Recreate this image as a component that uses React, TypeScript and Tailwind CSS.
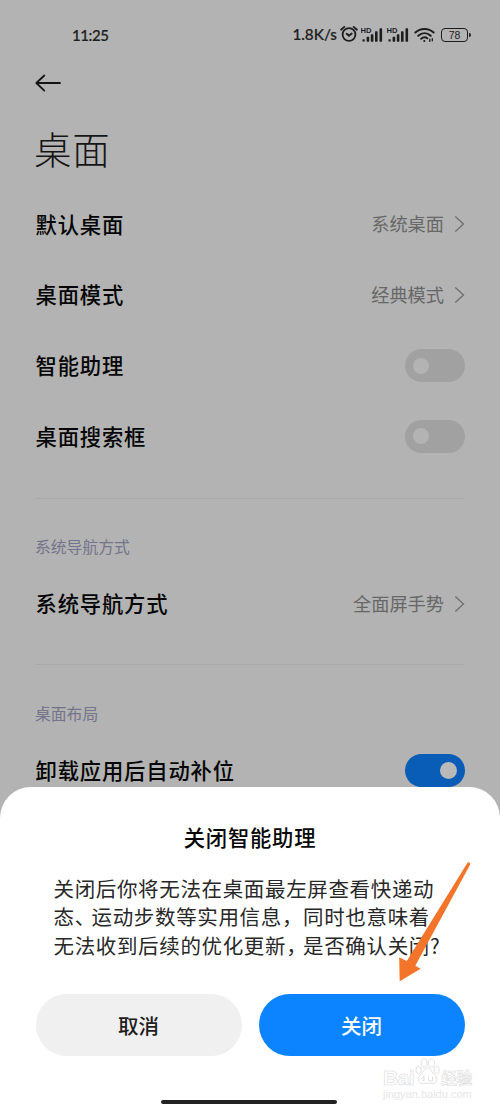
import React from "react";

function Chevron() {
  return (
    <svg className="ml-[10px] h-[18px] w-[11px]" viewBox="0 0 11 18" fill="none" stroke="#6e6e6e" strokeWidth="1.3">
      <path d="M1.3 1.5 L9.5 9 L1.3 16.5" />
    </svg>
  );
}

function Toggle({ on = false }: { on?: boolean }) {
  return on ? (
    <div className="flex h-[33px] w-[60px] items-center justify-end rounded-full bg-[#0a5db7] pr-[8px]">
      <div className="size-[17px] rounded-full bg-[#b9b9b9]" />
    </div>
  ) : (
    <div className="flex h-[33px] w-[60px] items-center rounded-full bg-[#a1a1a1] pl-[8px]">
      <div className="size-[16px] rounded-full bg-[#b3b3b3]" />
    </div>
  );
}

function Row({ label, value, children }: { label: string; value?: string; children?: React.ReactNode }) {
  return (
    <div className="flex h-[70.7px] items-center justify-between">
      <span className="pb-[2px] pl-[0.5px] text-[21.3px] leading-none font-medium tracking-[0.85px] whitespace-nowrap text-[#050505]">{label}</span>
      {value ? (
        <span className="flex items-center text-[18.2px] leading-none text-[#676767]">
          <span className="pb-[2px]">{value}</span>
          <Chevron />
        </span>
      ) : (
        children
      )}
    </div>
  );
}

function Signal() {
  return (
    <svg className="h-[16px] w-[23px]" viewBox="0 0 23 16" fill="#1d1d1d">
      <text x="-0.5" y="6.2" fontSize="7.6" fontWeight="600" textLength="11" lengthAdjust="spacingAndGlyphs" fontFamily="Liberation Sans, sans-serif">HD</text>
      <rect x="1.5" y="12.3" width="2.2" height="2.2" />
      <rect x="5.6" y="9.8" width="2.6" height="4.9" rx=".6" />
      <rect x="9.8" y="7.3" width="2.6" height="7.4" rx=".6" />
      <rect x="14" y="4.3" width="2.6" height="10.4" rx=".6" />
      <rect x="18.5" y="1.3" width="2.6" height="13.4" rx=".6" />
    </svg>
  );
}

function StatusBar() {
  return (
    <div className="flex h-[70px] items-center justify-between pr-[29px] pl-[72px] font-['Lato','Noto_Sans_CJK_SC',sans-serif] text-[#1d1d1d]">
      <span className="text-[15px] leading-none font-medium tracking-[-0.4px] [-webkit-text-stroke:0.2px_#1d1d1d]">11:25</span>
      <div className="flex items-center">
        <span className="mr-[3px] text-[15.3px] leading-none font-medium [-webkit-text-stroke:0.2px_#1d1d1d]">1.8K/s</span>
        <svg className="mt-[-2px] mr-[3px] h-[18px] w-[18px]" viewBox="0 0 18 17" fill="none" stroke="#1d1d1d" strokeWidth="1.8" strokeLinecap="round">
          <circle cx="9" cy="9" r="6.4" />
          <path d="M1.1 4.2 L4.3 1.4 M16.9 4.2 L13.7 1.4 M6.7 8.2 L9 10.2 L11.7 8" />
        </svg>
        <Signal />
        <div className="ml-[3px] flex">
          <Signal />
        </div>
        <svg className="ml-[4px] h-[16px] w-[21px]" viewBox="0 0 21 16" fill="none" stroke="#1d1d1d" strokeWidth="2" strokeLinecap="round">
          <path d="M1.4 5.5 C6.5 .7 14.5 .7 19.6 5.5 M4.3 8.8 C8 5.5 13 5.5 16.7 8.8" />
          <path d="M7.2 11.8 C9.2 10 11.6 10 13.3 11.3" />
          <circle cx="10.3" cy="14" r="1.1" fill="#1d1d1d" stroke="none" />
          <path d="M15.8 12.2 V14.4 M18.3 11.6 V13.8" strokeWidth="1.3" />
        </svg>
        <div className="ml-[6px] flex h-[14px] w-[27px] items-center justify-center rounded-[4px] border-[1.5px] border-[#1d1d1d] font-['Liberation_Sans',sans-serif] text-[10.5px] leading-none">
          78
        </div>
        <div className="ml-px h-[4px] w-[2px] rounded-r-full bg-[#1d1d1d]" />
      </div>
    </div>
  );
}

function Watermark() {
  return (
    <div className="absolute top-[271px] left-[383px] w-[92px]">
      <div className="flex h-[30px] items-end leading-none font-bold text-white [-webkit-text-stroke:0.6px_#dadada]">
        <span className="font-['Liberation_Sans',sans-serif] text-[21px] tracking-[-0.5px]">Bai</span>
        <svg className="mb-[3px] h-[27px] w-[27px]" viewBox="0 0 25 27" fill="white" stroke="#dedede" strokeWidth=".9">
          <ellipse cx="9" cy="5" rx="3" ry="4.2" />
          <ellipse cx="16.5" cy="5" rx="3" ry="4.2" />
          <ellipse cx="3.6" cy="12" rx="2.7" ry="3.8" />
          <ellipse cx="21.6" cy="12" rx="2.7" ry="3.8" />
          <path d="M12.5 10 C8.5 10 9 14 5 17.5 C1 21.5 4 26.5 8.5 25.5 C11 25 14 25 16.5 25.5 C21.5 26.5 24 21.5 20 17.5 C16 14 16.5 10 12.5 10 Z" />
          <path d="M9 17 V23 M9 19 C6 19 6 23 9 23 M13.5 18.5 V22 Q13.5 23 15 23 H17.5 V18.5" />
        </svg>
        <span className="mb-[3px] text-[15.5px]">经验</span>
      </div>
      <div className="mt-px font-['Liberation_Sans',sans-serif] text-[11px] leading-none whitespace-nowrap text-[#e6e6e6]">jingyan.baidu.com</div>
    </div>
  );
}

function Sheet() {
  return (
    <section className="absolute inset-x-0 bottom-0 flex h-[324px] flex-col rounded-t-[31px] bg-white">
      <h2 className="mt-[39px] text-center text-[21.3px] leading-[22px] font-medium tracking-[0.8px] text-[#070707]">关闭智能助理</h2>
      <div className="mt-[26px] pl-[53.5px] text-[20.5px] leading-[28.3px] tracking-[0.65px] whitespace-nowrap text-[#282828]">
        <p>关闭后你将无法在桌面最左屏查看快递动</p>
        <p>态<span className="mr-[6px] [font-feature-settings:'halt']">、</span>运动步数等实用信息，同时也意味着</p>
        <p>无法收到后续的优化更新<span className="mr-[6px] [font-feature-settings:'halt']">，</span>是否确认关闭?</p>
      </div>
      <div className="mt-[35px] flex gap-[17px] pr-[35px] pl-[36px] text-[20.5px] leading-none font-medium">
        <button className="h-[62px] flex-1 rounded-full bg-[#f0f0f0] pr-px text-[#202020]">取消</button>
        <button className="h-[62px] flex-1 rounded-full bg-[#0d84ff] pr-px text-white">关闭</button>
      </div>
      <Watermark />
      <div className="mt-auto mb-[7px] ml-[161px] h-[4px] w-[176px] rounded-full bg-[#222]" />
      <svg className="absolute top-[72px] left-[394px] h-[126px] w-[80px]" viewBox="0 0 80 126" fill="#f47429">
        <path d="M73.2 4.2 Q75.5 1.8 76.3 5.2 L21.3 106.8 L26.7 109.8 L5.7 122.3 L5.2 98.2 L12.8 102 Z" />
      </svg>
    </section>
  );
}

export default function App() {
  return (
    <main className="relative h-[1111px] w-[500px] overflow-hidden bg-[#b3b3b3] font-['Noto_Sans_CJK_SC',sans-serif]">
      <StatusBar />
      <div className="pr-[35px] pl-[35px]">
        <svg className="h-[26px] w-[28px]" viewBox="0 0 28 26" fill="none" stroke="#151515" strokeWidth="1.8" strokeLinecap="round" strokeLinejoin="round">
          <path d="M9.3 5.5 L1.3 13 L9.3 20.6 M1.5 13 H25" />
        </svg>
        <h1 className="mt-[32px] ml-[-1px] h-[61px] text-[37.5px] leading-[40px] font-light tracking-[0.8px] text-[#151515]">桌面</h1>
        <Row label="默认桌面" value="系统桌面" />
        <Row label="桌面模式" value="经典模式" />
        <Row label="智能助理"><Toggle /></Row>
        <Row label="桌面搜索框"><Toggle /></Row>
        <div className="mt-[26px] border-t border-[#a9a9a9]" />
        <h3 className="mt-[40px] text-[15.8px] leading-[16px] text-[#74748a]">系统导航方式</h3>
        <div className="mt-[14px]"><Row label="系统导航方式" value="全面屏手势" /></div>
        <div className="mt-[25px] border-t border-[#a9a9a9]" />
        <h3 className="mt-[41px] text-[15.8px] leading-[16px] text-[#74748a]">桌面布局</h3>
        <div className="mt-[13px]"><Row label="卸载应用后自动补位"><Toggle on /></Row></div>
      </div>
      <Sheet />
    </main>
  );
}
